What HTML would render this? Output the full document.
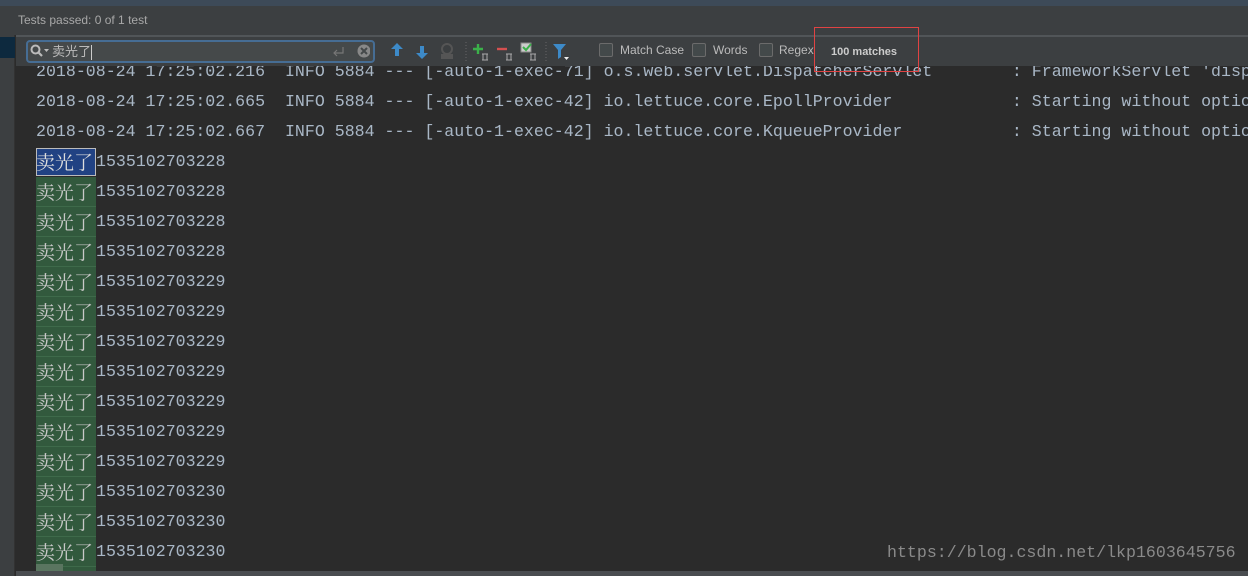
<!DOCTYPE html>
<html><head><meta charset="utf-8"><style>
*{margin:0;padding:0;box-sizing:border-box}
html{width:1248px;height:576px;overflow:hidden}
body{width:1248px;height:576px;overflow:hidden;background:#2b2b2b;position:relative;font-family:"Liberation Sans","Noto Sans CJK SC",sans-serif}
.top{position:absolute;left:0;top:0;width:1248px;height:6px;background:#3d4a58}
.tests{position:absolute;left:0;top:6px;width:1248px;height:29px;background:#3c3f41;color:#a8a8a8;font-size:12px;line-height:28px;padding-left:18px}
.gutter{position:absolute;left:0;top:35px;width:15px;height:541px;background:#3c3f41;border-right:1px solid #323232}
.gsel{position:absolute;left:0;top:37px;width:15px;height:21px;background:#0d293e}
.bar{position:absolute;left:16px;top:35px;width:1232px;height:31px;background:#3c3f41;border-top:2px solid #515558}
.field{position:absolute;left:26px;top:40px;width:349px;height:23px;border:2px solid #466d94;border-radius:4px;background:#45494a;font-size:13px;color:#bbb;line-height:19px;padding-left:24px}
.field .cur{display:inline-block;width:1px;height:15px;background:#ccc;vertical-align:middle}
.cb{position:absolute;top:43px;width:14px;height:14px;border:1px solid #6b6b6b;border-radius:2px;background:#43494a}
.lbl{position:absolute;top:43px;font-size:12px;color:#bbb;line-height:15px}
.con{position:absolute;left:36px;top:57px;width:1212px;height:514px;overflow:hidden;font-family:"Liberation Mono","Noto Serif CJK SC",monospace;font-size:16.6px;color:#a9b7c6}
.ln{height:30px;line-height:30px;white-space:pre}
.m{display:inline-block;vertical-align:top;width:60px;background:#32593d;color:#c8c8c8;border-bottom:1px solid #3e6a4a;height:30px;line-height:30px;font-family:"Noto Serif CJK SC",serif;font-size:19px;overflow:hidden}
.m1{background:#214283;outline:1px solid #bbb;outline-offset:-1px;height:28px;line-height:28px;margin-top:1px;border:none;color:#ddd}
.wm{position:absolute;left:887px;top:543px;font-family:"Liberation Mono",monospace;font-size:16.6px;color:#8a8a8a;white-space:pre}
.hs{position:absolute;left:16px;top:571px;width:1232px;height:5px;background:#4a4d50}
.red{position:absolute;left:814px;top:27px;width:105px;height:45px;border:1px solid #e04343}
</style></head><body>
<div class="top"></div>
<div class="tests">Tests passed: 0 of 1 test</div>
<div class="con"><div class="ln">2018-08-24 17:25:02.216  INFO 5884 --- [-auto-1-exec-71] o.s.web.servlet.DispatcherServlet        : FrameworkServlet 'disp</div><div class="ln">2018-08-24 17:25:02.665  INFO 5884 --- [-auto-1-exec-42] io.lettuce.core.EpollProvider            : Starting without optio</div><div class="ln">2018-08-24 17:25:02.667  INFO 5884 --- [-auto-1-exec-42] io.lettuce.core.KqueueProvider           : Starting without optio</div><div class="ln"><span class="m m1">卖光了</span>1535102703228</div><div class="ln"><span class="m">卖光了</span>1535102703228</div><div class="ln"><span class="m">卖光了</span>1535102703228</div><div class="ln"><span class="m">卖光了</span>1535102703228</div><div class="ln"><span class="m">卖光了</span>1535102703229</div><div class="ln"><span class="m">卖光了</span>1535102703229</div><div class="ln"><span class="m">卖光了</span>1535102703229</div><div class="ln"><span class="m">卖光了</span>1535102703229</div><div class="ln"><span class="m">卖光了</span>1535102703229</div><div class="ln"><span class="m">卖光了</span>1535102703229</div><div class="ln"><span class="m">卖光了</span>1535102703229</div><div class="ln"><span class="m">卖光了</span>1535102703230</div><div class="ln"><span class="m">卖光了</span>1535102703230</div><div class="ln"><span class="m">卖光了</span>1535102703230</div><div class="ln"><span class="m"></span></div></div>
<div class="bar"></div>
<div class="gutter"></div><div class="gsel"></div>
<div class="field">卖光了<span class="cur"></span></div>
<svg style="position:absolute;left:30px;top:44px" width="20" height="14"><circle cx="5.5" cy="5.5" r="4" fill="none" stroke="#bbb" stroke-width="2"/><line x1="8.5" y1="8.5" x2="12" y2="12" stroke="#bbb" stroke-width="2.2"/><path d="M14 5h5l-2.5 3z" fill="#bbb"/></svg>
<svg style="position:absolute;left:330px;top:44px" width="40" height="16"><path d="M13 3v6H4M7 6l-3 3 3 3" fill="none" stroke="#777" stroke-width="1.2"/><circle cx="34" cy="7" r="6.5" fill="#888"/><path d="M31 4l6 6M37 4l-6 6" stroke="#45494a" stroke-width="2"/></svg>
<svg style="position:absolute;left:388px;top:40px" width="190" height="22">
<path d="M9 3l-6 6h4v7h4v-7h4z" fill="#3d8ac8"/>
<path d="M34 19l-6-6h4v-7h4v7h4z" fill="#3d8ac8"/>
<circle cx="59" cy="9" r="5" fill="none" stroke="#555" stroke-width="2"/><rect x="53" y="14" width="12" height="5" fill="#555"/>
<line x1="78" y1="2" x2="78" y2="21" stroke="#666" stroke-dasharray="1 2"/>
<path d="M85 9h10M90 4v10" stroke="#3bb14a" stroke-width="2.4"/><path d="M95 14v6M99 14v6M94 14h6M94 20h6" stroke="#aaa"/>
<path d="M109 9h10" stroke="#d45050" stroke-width="2.4"/><path d="M119 14v6M123 14v6M118 14h6M118 20h6" stroke="#aaa"/>
<rect x="133" y="3" width="10" height="9" fill="#ccc" stroke="#888"/><path d="M135 7l3 3 5-6" stroke="#3bb14a" stroke-width="2" fill="none"/><path d="M143 14v6M147 14v6M142 14h6M142 20h6" stroke="#aaa"/>
<line x1="158" y1="2" x2="158" y2="21" stroke="#666" stroke-dasharray="1 2"/>
<path d="M165 4h13l-5 6v7l-3 2v-9z" fill="#3d8ac8"/><path d="M176 17h5l-2.5 3z" fill="#eee"/>
</svg>
<div class="cb" style="left:599px"></div><div class="lbl" style="left:620px">Match Case</div>
<div class="cb" style="left:692px"></div><div class="lbl" style="left:713px">Words</div>
<div class="cb" style="left:759px"></div><div class="lbl" style="left:779px">Regex</div>
<div class="lbl" style="left:831px;top:45px;font-weight:bold;font-size:11px;color:#ccc">100 matches</div>
<div class="red"></div>
<div class="wm">https://blog.csdn.net/lkp1603645756</div>
<div class="hs"></div>
<div style="position:absolute;left:36px;top:564px;width:27px;height:7px;background:#5a7560"></div>
</body></html>
